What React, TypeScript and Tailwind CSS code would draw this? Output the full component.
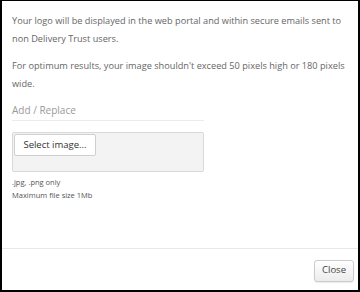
export default function App() {
  return (
    <div className="w-[360px] h-[292px] bg-white border-black border-t border-l-2 border-r-2 border-b-2 flex flex-col" style={{ fontFamily: '"Open Sans", "Liberation Sans", sans-serif' }}>
      <div className="flex-1 pl-[10px] pr-3 pt-[11px]">
        <p className="text-[9.2px] leading-[18px] text-[#666]">
          Your logo will be displayed in the web portal and within secure emails sent to non Delivery Trust users.
        </p>
        <p className="text-[9.2px] leading-[18px] text-[#666] mt-[9px]">
          For optimum results, your image shouldn't exceed 50 pixels high or 180 pixels wide.
        </p>
        <div className="w-[192px] mt-[9px] border-b border-[#ececec] pb-[2px] text-[10px] leading-[16px] text-[#999]">
          Add / Replace
        </div>
        <div className="w-[192px] h-[40px] mt-[11px] bg-[#f3f3f3] border border-[#d9d9d9] rounded-[2px] p-px">
          <div className="w-[82px] h-[22px] bg-white border border-[#cfcfcf] rounded-[2px] flex items-center justify-center text-[9.5px] text-[#333]">
            Select image...
          </div>
        </div>
        <div className="mt-[4px] text-[7.5px] leading-[13px] text-[#555]">.jpg, .png only</div>
        <div className="text-[7.5px] leading-[13px] text-[#555]">Maximum file size 1Mb</div>
      </div>
      <div className="h-[42px] border-t border-[#e8e8e8] flex items-center justify-end pr-[4px] pt-[2px]">
        <div className="w-[40px] h-[22px] rounded-[3px] border border-[#ccc] bg-gradient-to-b from-white to-[#ececec] flex items-center justify-center text-[9.5px] text-[#444] shadow-[0_1px_1px_rgba(0,0,0,0.08)]">
          Close
        </div>
      </div>
    </div>
  );
}
